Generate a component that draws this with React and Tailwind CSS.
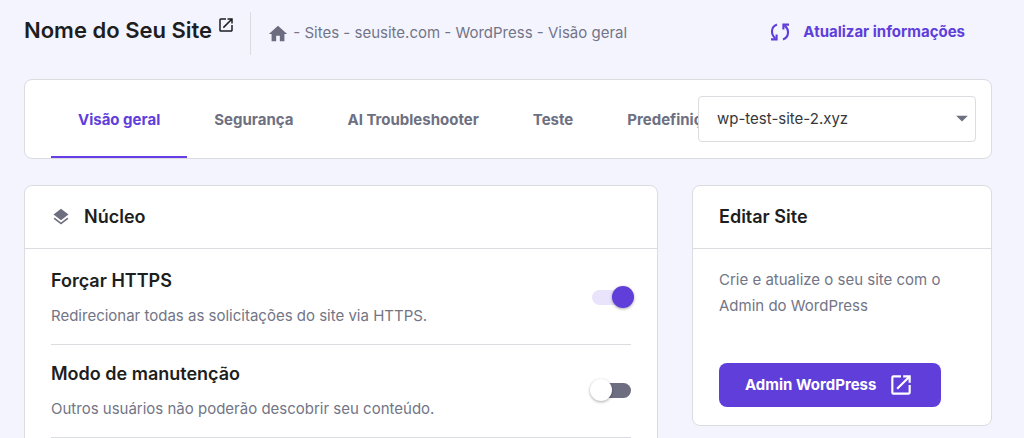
import React, { useState } from 'react';
import { MdArrowDropDown, MdHome, MdLayers, MdOpenInNew } from 'react-icons/md';

const tabs = ['Visão geral', 'Segurança', 'AI Troubleshooter', 'Teste', 'Predefinições'];

const crumbs = ['Sites', 'seusite.com', 'WordPress', 'Visão geral'];

const settings = [
  {
    id: 'force-https',
    title: 'Forçar HTTPS',
    text: 'Redirecionar todas as solicitações do site via HTTPS.',
    on: true,
  },
  {
    id: 'maintenance',
    title: 'Modo de manutenção',
    text: 'Outros usuários não poderão descobrir seu conteúdo.',
    on: false,
  },
];

const SyncIcon = () => (
  <svg viewBox="0 0 20 20" className="w-5 h-5" fill="none" stroke="currentColor" strokeWidth="2.1" aria-hidden="true">
    <path d="M7 2.6C0.6 5 0.6 12.4 5.4 16.4" />
    <path d="M1 17.4H6.6V12.4" />
    <path d="M13 17.4C19.4 15 19.4 7.6 14.6 3.6" />
    <path d="M19 2.6H13.4V7.6" />
  </svg>
);

const Header = () => (
  <header className="flex items-start pt-3 pb-6">
    <h1 className="flex items-start gap-[5px] text-[22px] leading-9 font-semibold">
      Nome do Seu Site
      <a href="#site" aria-label="Abrir site" className="pt-1">
        <MdOpenInNew className="w-[18px] h-[18px]" />
      </a>
    </h1>
    <nav aria-label="Caminho" className="flex items-center h-[43px] ml-[15px] pl-4 border-l border-[#dadce0] text-[15px] text-[#727586]">
      <a href="#home" aria-label="Início">
        <MdHome className="w-[22px] h-[22px] text-[#6b6d7e]" />
      </a>
      {crumbs.map((crumb) => (
        <span key={crumb} className="whitespace-pre">
          {' - '}
          <a href="#crumb">{crumb}</a>
        </span>
      ))}
    </nav>
    <button type="button" className="flex items-center gap-[13px] h-10 ml-auto mr-[27px] text-[15px] font-bold text-[#603eda]">
      <SyncIcon />
      Atualizar informações
    </button>
  </header>
);

const TabBar = () => {
  const [active, setActive] = useState(tabs[0]);

  return (
    <div className="flex items-center h-20 pl-[26px] pr-[15px] bg-white border border-[#dadce0] rounded-lg">
      <div role="tablist" className="flex flex-1 min-w-0 h-full overflow-hidden">
        {tabs.map((tab) => (
          <button
            key={tab}
            type="button"
            role="tab"
            aria-selected={tab === active}
            onClick={() => setActive(tab)}
            className={
              tab === active
                ? 'shrink-0 px-[27px] pt-1 text-[15px] font-bold text-[#603eda] border-b-2 border-[#673de6]'
                : 'shrink-0 px-[27px] pt-1 text-[15px] font-bold text-[#6d7081] border-b-2 border-transparent'
            }
          >
            {tab}
          </button>
        ))}
      </div>
      <div className="relative w-[278px] shrink-0">
        <select
          aria-label="Instalação"
          className="w-full h-[46px] px-[18px] appearance-none bg-white border border-[#dadce0] rounded text-[15px] text-[#36373b]"
        >
          <option>wp-test-site-2.xyz</option>
        </select>
        <MdArrowDropDown className="absolute right-0 top-2 w-7 h-7 text-[#6d7081] pointer-events-none" />
      </div>
    </div>
  );
};

const SettingRow = ({ id, title, text, on }) => (
  <div className="flex items-center justify-between pt-[15px] pb-4 border-b border-[#dadce0]">
    <label htmlFor={id}>
      <span className="block text-lg leading-7 font-semibold">{title}</span>
      <span className="block mt-[9px] text-[15px] leading-6 text-[#727586]">{text}</span>
    </label>
    {/* Track with an overhanging thumb */}
    <input
      id={id}
      type="checkbox"
      role="switch"
      defaultChecked={on}
      className="relative appearance-none shrink-0 w-[39px] h-[15px] rounded-full bg-[#6d6f80] checked:bg-[#e9e4fb] before:absolute before:-top-1 before:-left-[2px] before:w-[22px] before:h-[22px] before:rounded-full before:bg-white before:shadow-[0_1px_3px_rgba(0,0,0,0.35)] checked:before:left-5 checked:before:bg-[#603eda]"
    />
  </div>
);

const App = () => (
  <div
    className="h-screen overflow-hidden pl-6 pr-8 bg-[#f4f4ff] text-[#1d1e20]"
    style={{ fontFamily: 'Inter, "Liberation Sans", sans-serif' }}
  >
    <Header />
    <TabBar />

    <main className="flex items-start gap-[34px] mt-[26px]">
      {/* Core settings */}
      <section className="flex-1 min-w-0 bg-white border border-[#dadce0] rounded-lg">
        <div className="flex items-center gap-[13px] h-[63px] px-[26px] border-b border-[#dadce0]">
          <MdLayers className="w-5 h-5 text-[#6d6f80]" />
          <h2 className="text-lg font-semibold">Núcleo</h2>
        </div>
        <div className="px-[26px] pt-[3px] pb-8">
          {settings.map((setting) => (
            <SettingRow key={setting.id} {...setting} />
          ))}
        </div>
      </section>

      {/* Edit site */}
      <aside className="w-[300px] shrink-0 bg-white border border-[#dadce0] rounded-lg">
        <div className="flex items-center h-[63px] px-[26px] border-b border-[#dadce0]">
          <h2 className="text-lg font-semibold">Editar Site</h2>
        </div>
        <div className="px-[26px] pt-[18px] pb-[18px]">
          <p className="text-[15px] leading-[26px] text-[#727586]">
            Crie e atualize o seu site com o Admin do WordPress
          </p>
          <button type="button" className="flex items-center gap-3 h-11 w-[222px] mt-11 px-[26px] bg-[#603eda] rounded-lg text-[15px] font-bold text-white whitespace-nowrap">
            Admin WordPress
            <MdOpenInNew className="w-[26px] h-[26px] shrink-0" />
          </button>
        </div>
      </aside>
    </main>
  </div>
);

export default App;
